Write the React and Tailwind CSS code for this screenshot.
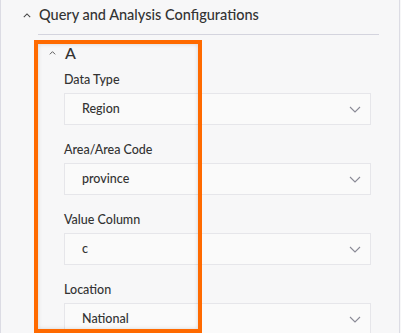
const FIELDS = [
  { label: "Data Type", value: "Region" },
  { label: "Area/Area Code", value: "province" },
  { label: "Value Column", value: "c" },
  { label: "Location", value: "National" },
];

function ChevronUp({ className }) {
  return (
    <svg className={className} viewBox="0 0 10 6" fill="none" stroke="currentColor" strokeWidth={1.3}>
      <polyline points="1,5 5,1 9,5" />
    </svg>
  );
}

function ChevronDown({ className }) {
  return (
    <svg className={className} viewBox="0 0 12 7" fill="none" stroke="currentColor" strokeWidth={1.1}>
      <polyline points="1,1 6,6 11,1" />
    </svg>
  );
}

export default function App() {
  return (
    <div
      className="relative w-[401px] h-[333px] overflow-hidden bg-[#f7f7f8] text-[#333]"
      style={{ fontFamily: 'Lato, "Noto Sans", sans-serif' }}
    >
      <div className="w-[400px] h-full border-x border-[#dcdce4]">
        {/* Section header */}
        <div className="h-[30px] flex items-center pl-[22px]">
          <ChevronUp className="w-[8px] h-[5px] text-[#444]" />
          <span className="ml-[8px] text-[14.5px] font-medium leading-none">Query and Analysis Configurations</span>
        </div>
        <div className="mt-[4px] ml-[37px] mr-[20px] h-px bg-[#d4d4de]" />

        {/* Group A */}
        <div className="h-[36px] flex items-center pl-[48px]">
          <ChevronUp className="w-[7px] h-[4px] text-[#444]" />
          <span className="ml-[9px] text-[16px] font-medium leading-none">A</span>
        </div>

        <div className="pl-[63px] pr-[28px]">
          {FIELDS.map((f) => (
            <div key={f.label} className="mb-[16px]">
              <div className="h-[18px] flex items-center text-[12.5px] font-medium">{f.label}</div>
              <div className="mt-[4px] h-[32px] flex items-center justify-between border border-[#e6e6ea] bg-[#fafafa] pl-[17px] pr-[9px]">
                <span className="text-[12.5px] font-medium">{f.value}</span>
                <ChevronDown className="w-[12px] h-[7px] text-[#8a8a96]" />
              </div>
            </div>
          ))}
        </div>
      </div>

      {/* Highlight annotation */}
      <div className="absolute left-[34px] top-[40px] w-[168px] h-[293px] border-[4px] border-[#ff6a00] shadow-[inset_0_0_4px_rgba(0,0,0,0.15)]" />
    </div>
  );
}
